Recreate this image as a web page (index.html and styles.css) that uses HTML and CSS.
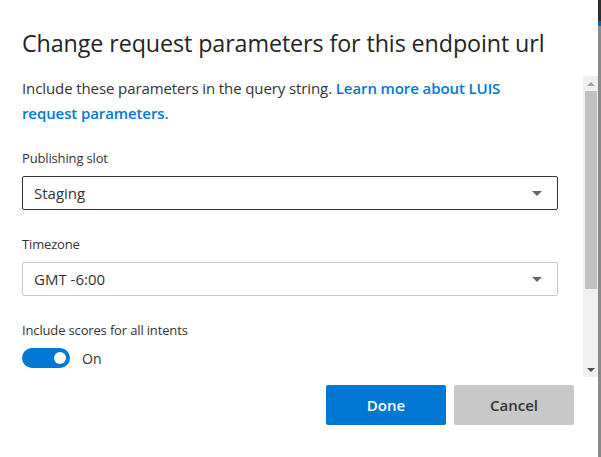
FILE: index.html
```html
<!DOCTYPE html>
<html lang="en">
<head>
<meta charset="utf-8">
<title>Change request parameters</title>
<link rel="stylesheet" href="styles.css">
</head>
<body>
<div class="frame">
  <div class="dialog">
    <header class="title">Change request parameters for this endpoint url</header>
    <div class="body">
      <div class="content">
        <p class="intro">Include these parameters in the query string. <a class="link" href="#">Learn more about LUIS request parameters.</a></p>
        <div class="field">
          <div class="label">Publishing slot</div>
          <div class="select focused"><span>Staging</span><span class="caret"></span></div>
        </div>
        <div class="field">
          <div class="label">Timezone</div>
          <div class="select"><span>GMT -6:00</span><span class="caret"></span></div>
        </div>
        <div class="field">
          <div class="label">Include scores for all intents</div>
          <div class="toggle-row"><span class="toggle"><span class="knob"></span></span><span class="toggle-text">On</span></div>
        </div>
      </div>
      <div class="scrollbar">
        <div class="arrow up"></div>
        <div class="track"><div class="thumb"></div></div>
        <div class="arrow down"></div>
      </div>
    </div>
    <footer class="actions">
      <button class="btn primary">Done</button>
      <button class="btn secondary">Cancel</button>
    </footer>
  </div>
  <div class="edge"></div>
</div>
</body>
</html>
```
FILE: styles.css
```css
html, body {
  margin: 0;
  padding: 0;
  background: #ffffff;
}
body {
  font-family: "Open Sans", "Noto Sans", sans-serif;
  color: #333333;
}
.frame {
  display: flex;
  width: 601px;
  height: 457px;
}
.dialog {
  flex: 1;
  display: flex;
  flex-direction: column;
}
.edge {
  width: 3px;
  background: linear-gradient(to bottom, #2d2d2d 0 21px, #0063b1 21px 26px, #8a8a8a 26px);
}
.title {
  height: 76px;
  box-sizing: border-box;
  padding: 25px 0 0 22px;
  font-size: 23.3px;
  line-height: 36px;
  font-weight: 400;
  color: #252423;
  letter-spacing: -0.1px;
  white-space: nowrap;
}
.body {
  display: flex;
  height: 301px;
}
.content {
  flex: 1;
  overflow: hidden;
  padding: 0 25px 0 22px;
}
.intro {
  margin: 0;
  font-size: 15px;
  line-height: 25px;
  color: #333333;
  letter-spacing: -0.1px;
}
.link {
  color: #0078d4;
  font-weight: 600;
  text-decoration: none;
}
.field {
  margin-top: 22px;
}
.field + .field {
  margin-top: 24px;
}
.label {
  font-size: 13px;
  line-height: 20px;
  color: #333333;
  letter-spacing: -0.15px;
}
.select {
  margin-top: 8px;
  height: 34px;
  box-sizing: border-box;
  border: 1px solid #c8c8c8;
  border-radius: 2px;
  display: flex;
  align-items: center;
  justify-content: space-between;
  padding: 0 15px 0 11px;
  font-size: 15px;
  color: #333333;
}
.select.focused {
  border-color: #333333;
}
.caret {
  width: 0;
  height: 0;
  border-left: 5px solid transparent;
  border-right: 5px solid transparent;
  border-top: 5px solid #666666;
  margin-top: 1px;
}
.toggle-row {
  margin-top: 8px;
  display: flex;
  align-items: center;
  gap: 12px;
}
.toggle {
  width: 48px;
  height: 20px;
  border-radius: 10px;
  background: #0078d4;
  display: flex;
  align-items: center;
  justify-content: flex-end;
  padding-right: 4px;
  box-sizing: border-box;
}
.knob {
  width: 12px;
  height: 12px;
  border-radius: 50%;
  background: #ffffff;
}
.toggle-text {
  font-size: 14px;
  color: #333333;
}
.scrollbar {
  width: 15px;
  background: #f0f0f0;
  display: flex;
  flex-direction: column;
  align-items: center;
}
.arrow {
  height: 15px;
  width: 15px;
  display: flex;
  align-items: center;
  justify-content: center;
}
.arrow::before {
  content: "";
  width: 0;
  height: 0;
  border-left: 4px solid transparent;
  border-right: 4px solid transparent;
}
.arrow.up::before {
  border-bottom: 4px solid #a3a3a3;
}
.arrow.down::before {
  border-top: 4px solid #505050;
}
.track {
  flex: 1;
  width: 15px;
}
.thumb {
  margin: 0 1px 0 2px;
  height: 198px;
  background: #c1c1c1;
}
.actions {
  display: flex;
  justify-content: flex-end;
  gap: 8px;
  padding: 8px 24px 0 0;
}
.btn {
  width: 120px;
  height: 40px;
  border: none;
  border-radius: 2px;
  font-family: "Open Sans", "Noto Sans", sans-serif;
  font-size: 15px;
  font-weight: 600;
}
.primary {
  background: #0078d4;
  color: #ffffff;
}
.secondary {
  background: #c8c8c8;
  color: #333333;
}
```
